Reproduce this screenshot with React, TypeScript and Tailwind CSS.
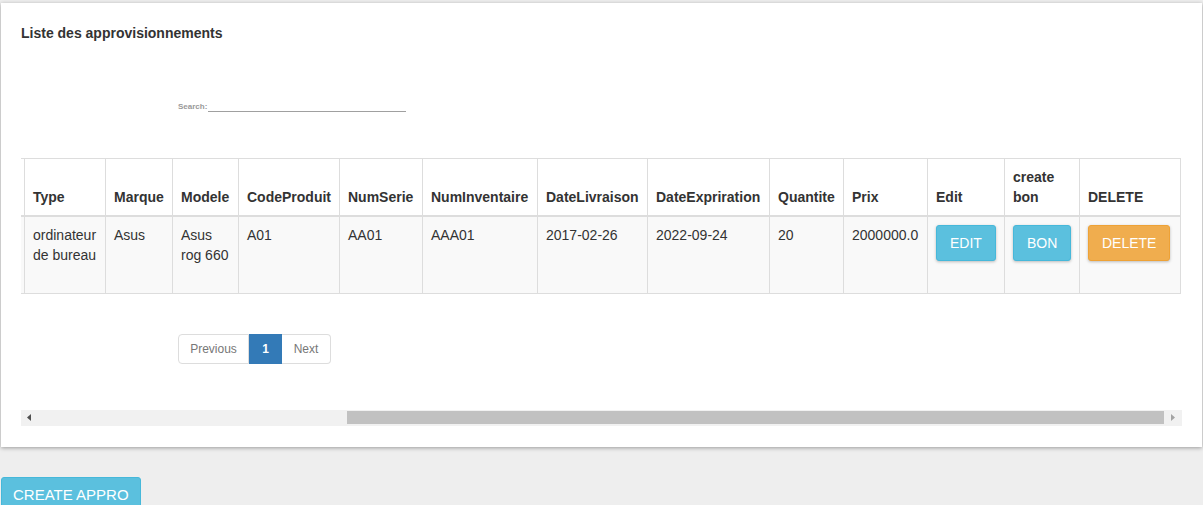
import React from 'react';

const headers = [
  { label: '', w: 'w-[60px]' },
  { label: 'Type', w: 'w-[81px]' },
  { label: 'Marque', w: 'w-[67px]' },
  { label: 'Modele', w: 'w-[66px]' },
  { label: 'CodeProduit', w: 'w-[101px]' },
  { label: 'NumSerie', w: 'w-[83px]' },
  { label: 'NumInventaire', w: 'w-[115px]' },
  { label: 'DateLivraison', w: 'w-[110px]' },
  { label: 'DateExpriration', w: 'w-[122px]' },
  { label: 'Quantite', w: 'w-[74px]' },
  { label: 'Prix', w: 'w-[84px]' },
  { label: 'Edit', w: 'w-[77px]' },
  { label: 'create bon', w: 'w-[75px]' },
  { label: 'DELETE', w: 'w-[101px]' },
];

const row = ['', 'ordinateur de bureau', 'Asus', 'Asus rog 660', 'A01', 'AA01', 'AAA01', '2017-02-26', '2022-09-24', '20', '2000000.0'];

const thCls = 'border border-b-2 border-[#ddd] px-2 py-2 text-left align-bottom font-bold leading-5';
const tdCls = 'border border-[#ddd] px-2 py-2 align-top leading-5 h-[77px]';

const ActionButton: React.FC<{ label: string; color: 'info' | 'warning' }> = ({ label, color }) => (
  <button
    type="button"
    className={`h-9 rounded-[3px] border px-[13px] text-[14px] uppercase leading-5 text-white shadow-[0_1px_3px_rgba(0,0,0,0.25)] ${
      color === 'info' ? 'border-[#46b8da] bg-[#5bc0de]' : 'border-[#eea236] bg-[#f0ad4e]'
    }`}
  >
    {label}
  </button>
);

const App: React.FC = () => {
  return (
    <div className="min-h-screen bg-[#eeeeee] px-[1px] pt-[3px] font-['Liberation_Sans',Arial,sans-serif] text-[14px] text-[#333]">
      <div className="bg-white p-5 pb-[21px] shadow-[0_1px_4px_rgba(0,0,0,0.35)]">
        <h3 className="text-[14px] font-bold leading-5">Liste des approvisionnements</h3>

        <div className="ml-[157px] mt-[57px] flex items-end">
          <label className="text-[8px] font-bold leading-[10px] text-[#999]">Search:</label>
          <div className="ml-[1px] h-[12px] w-[198px] border-b border-[#a0a0a0]" />
        </div>

        <div className="mt-[46px] flex justify-end overflow-hidden pr-[1px]">
          <table className="w-[1216px] shrink-0 table-fixed border-collapse">
            <colgroup>
              {headers.map((h, i) => (
                <col key={i} className={h.w} />
              ))}
            </colgroup>
            <thead>
              <tr className="bg-white">
                {headers.map((h, i) => (
                  <th key={i} className={thCls}>
                    {h.label}
                  </th>
                ))}
              </tr>
            </thead>
            <tbody>
              <tr className="bg-[#f9f9f9]">
                {row.map((c, i) => (
                  <td key={i} className={tdCls}>
                    {c}
                  </td>
                ))}
                <td className={tdCls}>
                  <ActionButton label="Edit" color="info" />
                </td>
                <td className={tdCls}>
                  <ActionButton label="Bon" color="info" />
                </td>
                <td className={tdCls}>
                  <ActionButton label="Delete" color="warning" />
                </td>
              </tr>
            </tbody>
          </table>
        </div>

        <div className="ml-[157px] mt-[40px] flex h-[30px] w-fit text-[12px] leading-[18px]">
          <span className="w-[71px] rounded-l-[4px] border border-[#ddd] py-[5px] text-center text-[#777]">Previous</span>
          <span className="w-[33px] border border-[#337ab7] bg-[#337ab7] py-[5px] text-center font-bold text-white">1</span>
          <span className="w-[49px] rounded-r-[4px] border border-l-0 border-[#ddd] py-[5px] text-center text-[#777]">Next</span>
        </div>

        <div className="mt-[46px] flex h-4 items-center bg-[#f1f1f1]">
          <div className="flex w-[15px] justify-center">
            <svg width="4" height="7" viewBox="0 0 4 7">
              <path d="M4 0 L0 3.5 L4 7 Z" fill="#505050" />
            </svg>
          </div>
          <div className="flex h-full flex-1 items-center">
            <div className="ml-[311px] h-[13px] flex-1 bg-[#c1c1c1]" />
          </div>
          <div className="flex w-[18px] justify-center">
            <svg width="4" height="7" viewBox="0 0 4 7">
              <path d="M0 0 L4 3.5 L0 7 Z" fill="#a3a3a3" />
            </svg>
          </div>
        </div>
      </div>

      <div className="mt-[30px]">
        <button
          type="button"
          className="h-9 rounded-[3px] border border-[#46b8da] bg-[#5bc0de] px-[11px] text-[15px] uppercase leading-5 text-white"
        >
          Create Appro
        </button>
      </div>
    </div>
  );
};

export default App;
